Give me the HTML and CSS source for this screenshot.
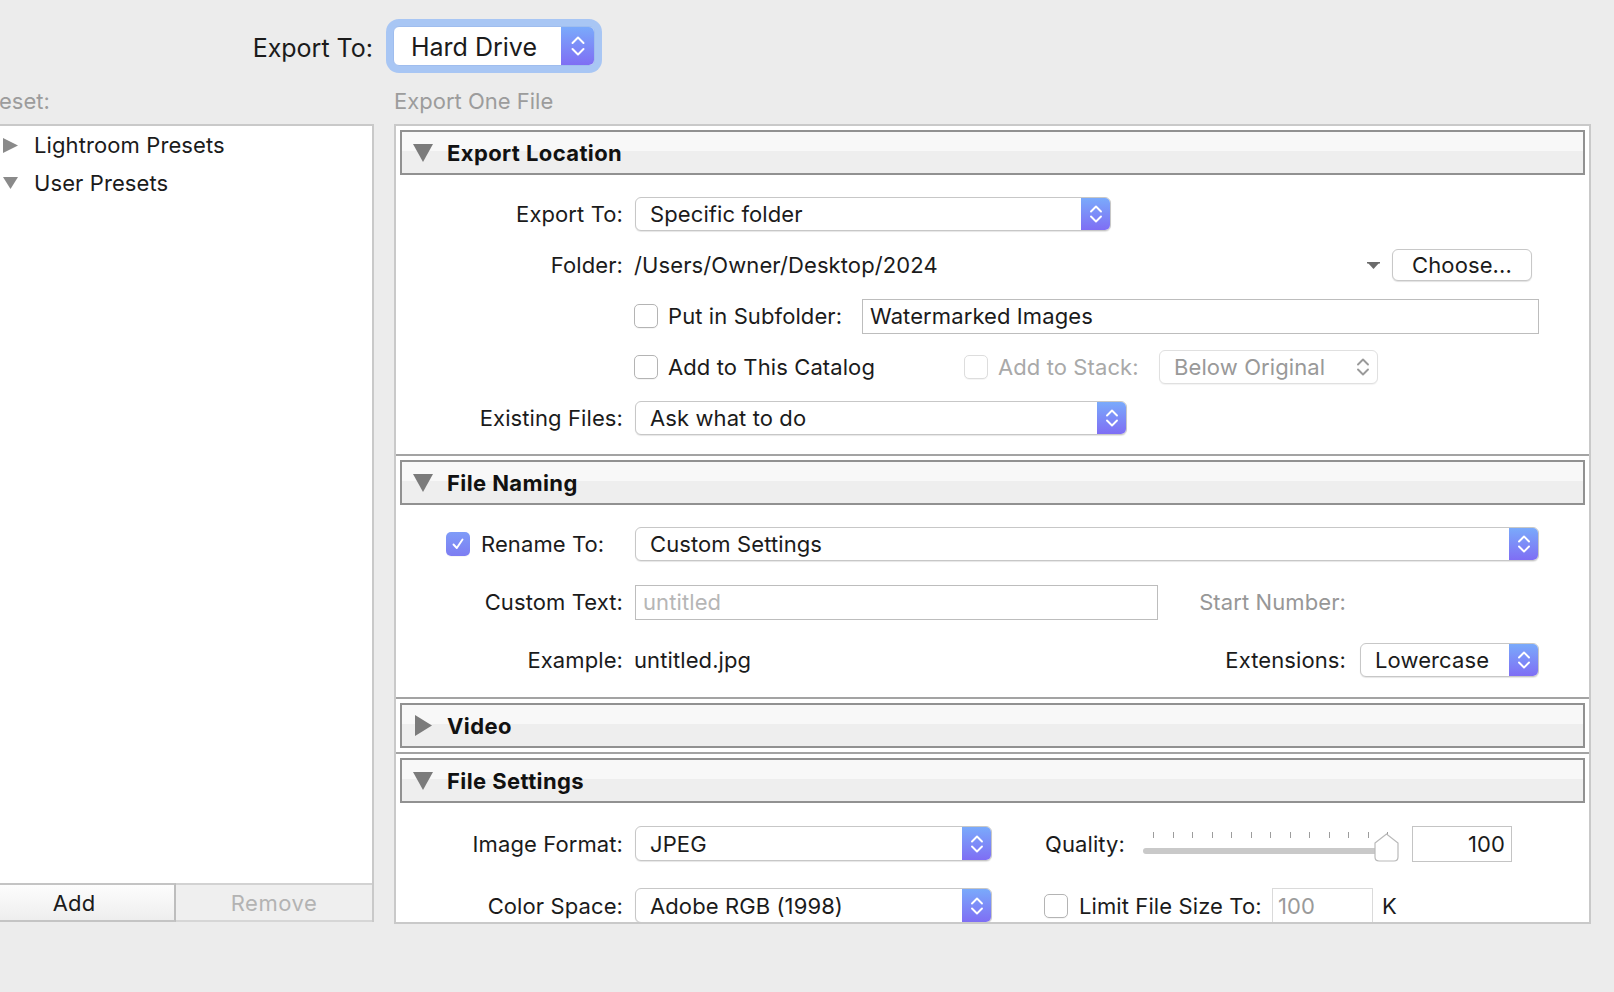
FILE: index.html
```html
<!DOCTYPE html>
<html>
<head>
<meta charset="utf-8">
<link rel="stylesheet" href="styles.css">
</head>
<body>
<div class="topbar">
  <div class="top-label">Export To:</div>
  <div class="popup popup-top">
    <div class="val">Hard Drive</div>
    <div class="stepper stepper-lg">
      <svg width="18" height="28" viewBox="0 0 18 28"><path d="M3.5 11 L9 5.5 L14.5 11 M3.5 17 L9 22.5 L14.5 17" fill="none" stroke="#fff" stroke-width="2" stroke-linecap="round" stroke-linejoin="round"/></svg>
    </div>
  </div>
</div>

<div class="main">
  <div class="left">
    <div class="caption caption-cut">Preset:</div>
    <div class="preset-panel">
      <div class="tree">
        <div class="tree-row">
          <span class="tree-tri"><svg width="15" height="15" viewBox="0 0 15 15"><polygon points="0,0 15,7.5 0,15" fill="#8a8a8a"/></svg></span>
          <span>Lightroom Presets</span>
        </div>
        <div class="tree-row">
          <span class="tree-tri"><svg width="15" height="12" viewBox="0 0 15 12"><polygon points="0,0 15,0 7.5,12" fill="#8a8a8a"/></svg></span>
          <span>User Presets</span>
        </div>
      </div>
      <div class="btns">
        <div class="btn-add">Add</div>
        <div class="btn-remove">Remove</div>
      </div>
    </div>
  </div>

  <div class="right">
    <div class="caption">Export One File</div>
    <div class="panel">

      <div class="section">
        <div class="sec-head">
          <svg class="sec-tri" width="20" height="18" viewBox="0 0 20 18"><polygon points="0,0 20,0 10,18" fill="#7b7b7b"/></svg>
          <span>Export Location</span>
        </div>
        <div class="sec-body">
          <div class="row">
            <div class="lbl">Export To:</div>
            <div class="popup w-exportto">
              <div class="val">Specific folder</div>
              <div class="stepper"><svg width="16" height="26" viewBox="0 0 16 26"><path d="M3 10.5 L8 5.5 L13 10.5 M3 15.5 L8 20.5 L13 15.5" fill="none" stroke="#fff" stroke-width="1.9" stroke-linecap="round" stroke-linejoin="round"/></svg></div>
            </div>
          </div>
          <div class="row">
            <div class="lbl">Folder:</div>
            <div class="path">/Users/Owner/Desktop/2024</div>
            <svg class="folder-tri" width="13" height="7" viewBox="0 0 13 7"><rect x="0" y="0" width="13" height="1.5" fill="#6b6b6b"/><polygon points="1,1 12,1 6.5,7" fill="#6b6b6b"/></svg>
            <div class="btn-choose">Choose...</div>
          </div>
          <div class="row">
            <div class="lbl"></div>
            <div class="cb"></div>
            <div class="cb-text w-subfolder">Put in Subfolder:</div>
            <div class="field w-subfield">Watermarked Images</div>
          </div>
          <div class="row">
            <div class="lbl"></div>
            <div class="cb"></div>
            <div class="cb-text w-catalog">Add to This Catalog</div>
            <div class="cb cb-disabled"></div>
            <div class="cb-text dim w-stack">Add to Stack:</div>
            <div class="popup popup-disabled w-below">
              <div class="val">Below Original</div>
              <div class="stepper-dim"><svg width="16" height="26" viewBox="0 0 16 26"><path d="M3 10.5 L8 5.5 L13 10.5 M3 15.5 L8 20.5 L13 15.5" fill="none" stroke="#9a9a9a" stroke-width="1.9" stroke-linecap="round" stroke-linejoin="round"/></svg></div>
            </div>
          </div>
          <div class="row">
            <div class="lbl">Existing Files:</div>
            <div class="popup w-existing">
              <div class="val">Ask what to do</div>
              <div class="stepper"><svg width="16" height="26" viewBox="0 0 16 26"><path d="M3 10.5 L8 5.5 L13 10.5 M3 15.5 L8 20.5 L13 15.5" fill="none" stroke="#fff" stroke-width="1.9" stroke-linecap="round" stroke-linejoin="round"/></svg></div>
            </div>
          </div>
        </div>
      </div>

      <div class="section">
        <div class="sec-head">
          <svg class="sec-tri" width="20" height="18" viewBox="0 0 20 18"><polygon points="0,0 20,0 10,18" fill="#7b7b7b"/></svg>
          <span>File Naming</span>
        </div>
        <div class="sec-body body-naming">
          <div class="row">
            <div class="lbl-check">
              <div class="cb cb-on"><svg width="16" height="16" viewBox="0 0 16 16"><path d="M3.5 8.5 L6.8 12 L12.5 3.5" fill="none" stroke="#fff" stroke-width="1.9" stroke-linecap="round" stroke-linejoin="round"/></svg></div>
              <span class="cb-text">Rename To:</span>
            </div>
            <div class="popup w-rename">
              <div class="val">Custom Settings</div>
              <div class="stepper"><svg width="16" height="26" viewBox="0 0 16 26"><path d="M3 10.5 L8 5.5 L13 10.5 M3 15.5 L8 20.5 L13 15.5" fill="none" stroke="#fff" stroke-width="1.9" stroke-linecap="round" stroke-linejoin="round"/></svg></div>
            </div>
          </div>
          <div class="row">
            <div class="lbl">Custom Text:</div>
            <div class="field w-custom placeholder">untitled</div>
            <div class="right-lbl dim2">Start Number:</div>
          </div>
          <div class="row">
            <div class="lbl">Example:</div>
            <div class="path">untitled.jpg</div>
            <div class="ext-lbl">Extensions:</div>
            <div class="popup w-lower">
              <div class="val">Lowercase</div>
              <div class="stepper"><svg width="16" height="26" viewBox="0 0 16 26"><path d="M3 10.5 L8 5.5 L13 10.5 M3 15.5 L8 20.5 L13 15.5" fill="none" stroke="#fff" stroke-width="1.9" stroke-linecap="round" stroke-linejoin="round"/></svg></div>
            </div>
          </div>
        </div>
      </div>

      <div class="section section-collapsed">
        <div class="sec-head">
          <svg class="sec-tri" width="20" height="21" viewBox="0 0 20 21"><polygon points="2,0 19,10.5 2,21" fill="#7b7b7b"/></svg>
          <span>Video</span>
        </div>
      </div>

      <div class="section section-last">
        <div class="sec-head">
          <svg class="sec-tri" width="20" height="18" viewBox="0 0 20 18"><polygon points="0,0 20,0 10,18" fill="#7b7b7b"/></svg>
          <span>File Settings</span>
        </div>
        <div class="sec-body body-settings">
          <div class="row row-35">
            <div class="lbl">Image Format:</div>
            <div class="popup popup-35 w-format">
              <div class="val">JPEG</div>
              <div class="stepper"><svg width="16" height="26" viewBox="0 0 16 26"><path d="M3 10.5 L8 5.5 L13 10.5 M3 15.5 L8 20.5 L13 15.5" fill="none" stroke="#fff" stroke-width="1.9" stroke-linecap="round" stroke-linejoin="round"/></svg></div>
            </div>
            <div class="q-lbl">Quality:</div>
            <div class="slider">
              <div class="ticks">
                <i></i><i></i><i></i><i></i><i></i><i></i><i></i><i></i><i></i><i></i><i></i><i></i><i></i>
              </div>
              <div class="track"></div>
              <svg class="thumb" width="25" height="29" viewBox="0 0 25 29"><path d="M1 10 L12.5 1 L24 10 V24 Q24 28 20 28 H5 Q1 28 1 24 Z" fill="#fff" stroke="#b9b9b9" stroke-width="1.2"/></svg>
            </div>
            <div class="field num-field">100</div>
          </div>
          <div class="row row-35">
            <div class="lbl">Color Space:</div>
            <div class="popup popup-35 w-format">
              <div class="val">Adobe RGB (1998)</div>
              <div class="stepper"><svg width="16" height="26" viewBox="0 0 16 26"><path d="M3 10.5 L8 5.5 L13 10.5 M3 15.5 L8 20.5 L13 15.5" fill="none" stroke="#fff" stroke-width="1.9" stroke-linecap="round" stroke-linejoin="round"/></svg></div>
            </div>
            <div class="cb cb-limit"></div>
            <div class="cb-text w-limit">Limit File Size To:</div>
            <div class="field limit-field placeholder-dark">100</div>
            <div class="k">K</div>
          </div>
        </div>
      </div>

    </div>
  </div>
</div>
</body>
</html>
```

FILE: styles.css
```css
* { box-sizing: border-box; }
html, body { margin: 0; padding: 0; }
body {
  width: 1614px;
  height: 992px;
  overflow: hidden;
  background: #ececec;
  font-family: Inter, "Noto Sans", "Liberation Sans", sans-serif;
  color: #1b1b1b;
  font-size: 22px;
  letter-spacing: 0.1px;
}

/* top bar */
.topbar {
  height: 80px;
  display: flex;
  align-items: flex-start;
  padding-top: 26px;
}
.top-label {
  width: 373px;
  text-align: right;
  font-size: 25px;
  line-height: 40px;
  padding-top: 2px;
  letter-spacing: 0;
}
.popup-top {
  margin-left: 20px;
  width: 202px;
  height: 40px !important;
  font-size: 25px;
  letter-spacing: 0;
  border-radius: 6px !important;
  box-shadow: 0 0 0 7px #a8c6f4 !important;
  border-color: #9fbdee !important;
}
.popup-top .val { padding-left: 17px !important; padding-top: 2px; }
.stepper-lg { width: 33px !important; }

/* main grid */
.main {
  display: grid;
  grid-template-columns: 374px 1197px;
  column-gap: 20px;
}
.caption {
  font-size: 22px;
  line-height: 30px;
  color: #9c9c9c;
  margin: 6px 0 8px;
  white-space: nowrap;
  letter-spacing: 0;
}
.caption-cut { margin-left: -23px; }

/* left presets */
.preset-panel {
  height: 798px;
  background: #fff;
  border-top: 2px solid #c9c9c9;
  border-right: 2px solid #c9c9c9;
  display: flex;
  flex-direction: column;
}
.tree { flex: 1; }
.tree-row {
  height: 38px;
  display: flex;
  align-items: center;
}
.tree-tri {
  width: 34px;
  padding-left: 3px;
  display: flex;
  align-items: center;
}
.btns {
  height: 39px;
  display: flex;
}
.btn-add {
  width: 176px;
  border-top: 2px solid #c4c4c4;
  border-bottom: 2px solid #c4c4c4;
  border-right: 2px solid #bdbdbd;
  background: linear-gradient(#fdfdfd, #eeeeee);
  display: flex;
  align-items: center;
  justify-content: center;
  padding-right: 26px;
}
.btn-remove {
  flex: 1;
  border-top: 2px solid #d2d2d2;
  border-bottom: 2px solid #d6d6d6;
  background: #efefef;
  color: #b3b3b3;
  display: flex;
  align-items: center;
  justify-content: center;
  letter-spacing: 0.5px;
}

/* right panel */
.panel {
  height: 800px;
  background: #fff;
  border: 2px solid #c9c9c9;
  overflow: hidden;
}
.section { border-bottom: 2px solid #a3a3a3; }
.section-collapsed { padding-bottom: 4px; }
.section-last { border-bottom: none; }
.sec-head {
  margin: 4px 4px 0;
  height: 45px;
  border: 2px solid #919191;
  background: linear-gradient(#f8f8f8 0, #f8f8f8 47%, #eeeeee 47%, #eeeeee 100%);
  display: flex;
  align-items: center;
  padding-left: 11px;
  font-weight: 700;
  font-size: 22px;
  letter-spacing: 0.4px;
  color: #111;
}
.sec-tri { margin-right: 14px; flex: none; }

.sec-body {
  padding: 22px 0 19px;
  display: flex;
  flex-direction: column;
  gap: 17px;
}
.body-naming { gap: 24px; padding-bottom: 20px; }
.body-settings { padding-top: 23px; gap: 27px; padding-bottom: 0; }

.row {
  height: 34px;
  display: flex;
  align-items: center;
  white-space: nowrap;
}
.row-35 { height: 35px; }
.lbl {
  width: 227px;
  margin-right: 12px;
  text-align: right;
  flex: none;
}
.lbl-check {
  width: 239px;
  padding-left: 50px;
  display: flex;
  align-items: center;
  flex: none;
}
.lbl-check .cb { margin-right: 11px; }

.path { flex: 1; margin-left: -1px; }
.folder-tri { margin-right: 12px; flex: none; }

.btn-choose {
  width: 140px;
  height: 32px;
  border: 1px solid #c8c8c8;
  border-radius: 6px;
  background: #fff;
  box-shadow: 0 1px 1px rgba(0,0,0,0.12);
  display: flex;
  align-items: center;
  justify-content: center;
  margin-right: 57px;
  flex: none;
}

/* popups */
.popup {
  height: 34px;
  display: flex;
  align-items: stretch;
  border: 1px solid #c7c7c7;
  border-radius: 6px;
  background: #fff;
  box-shadow: 0 1px 1px rgba(0,0,0,0.10);
  overflow: hidden;
  flex: none;
}
.popup-35 { height: 35px; }
.popup .val {
  flex: 1;
  padding-left: 14px;
  display: flex;
  align-items: center;
}
.stepper {
  width: 29px;
  background: linear-gradient(#7aaafb, #7f6ef4);
  display: flex;
  align-items: center;
  justify-content: center;
}
.stepper-dim {
  width: 29px;
  display: flex;
  align-items: center;
  justify-content: center;
}
.popup-disabled {
  border-color: #e0e0e0;
  box-shadow: 0 1px 1px rgba(0,0,0,0.05);
  color: #999;
}
.w-exportto { width: 476px; }
.w-existing { width: 492px; }
.w-rename { width: 904px; }
.w-below { width: 219px; }
.w-lower { width: 179px; }
.w-format { width: 357px; }

/* checkboxes */
.cb {
  width: 24px;
  height: 24px;
  border: 1px solid #b4b4b4;
  border-radius: 5px;
  background: #fff;
  flex: none;
  margin-left: -1px;
  box-shadow: 0 1px 0 rgba(0,0,0,0.04);
}
.cb-disabled { border-color: #dddddd; margin-left: 0; }
.cb-on {
  margin-left: 0;
  border: none;
  background: linear-gradient(#7f9cf8, #7d7df2);
  display: flex;
  align-items: center;
  justify-content: center;
}
.cb-text { margin-left: 10px; flex: none; }
.lbl-check .cb-text { margin-left: 0; }
.dim { color: #a9a9a9; }
.dim2 { color: #979797; }
.w-subfolder { width: 194px; }
.w-catalog { width: 296px; }
.w-stack { width: 161px; }
.w-limit { width: 193px; margin-left: 11px; }

/* fields */
.field {
  height: 35px;
  border: 1px solid #bdbdbd;
  background: #fff;
  display: flex;
  align-items: center;
  padding-left: 7px;
  flex: none;
}
.w-subfield { width: 677px; }
.w-custom { width: 523px; }
.placeholder { color: #b6b6b6; }
.placeholder-dark { color: #9a9a9a; }
.right-lbl { width: 188px; text-align: right; }
.ext-lbl { margin-right: 14px; }
.w-lower { margin-right: 50px; }

/* quality slider */
.q-lbl { margin-left: 53px; width: 98px; flex: none; }
.slider {
  position: relative;
  width: 255px;
  height: 35px;
  flex: none;
}
.ticks {
  position: absolute;
  left: 10px;
  top: 6px;
  width: 235px;
  display: flex;
  justify-content: space-between;
}
.ticks i {
  display: block;
  width: 1px;
  height: 6px;
  background: #9d9d9d;
}
.track {
  position: absolute;
  left: 0;
  top: 22px;
  width: 244px;
  height: 6px;
  border-radius: 3px;
  background: #c9c9c9;
}
.thumb {
  position: absolute;
  left: 231px;
  top: 7px;
}
.num-field {
  width: 100px;
  height: 36px;
  margin-left: 14px;
  justify-content: flex-end;
  padding-right: 6px;
  border-color: #c4c4c4;
}
.cb-limit { margin-left: 52px; }
.limit-field {
  width: 101px;
  height: 36px;
  margin-top: 1px;
  border-color: #dadada;
  padding-left: 5px;
}
.k { margin-left: 9px; }
```
